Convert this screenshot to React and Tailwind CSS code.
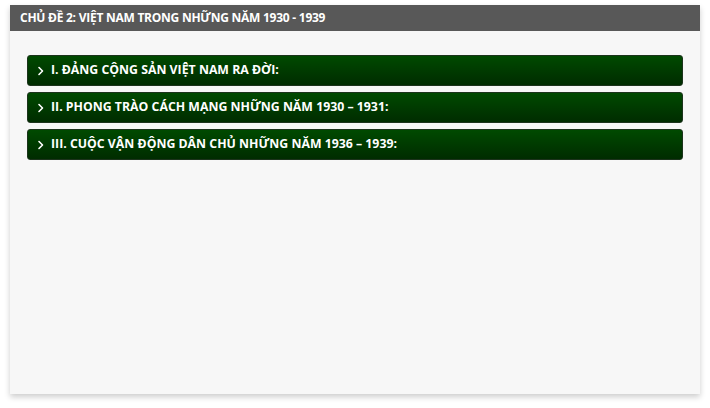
import React from "react";

const items = [
  "I. ĐẢNG CỘNG SẢN VIỆT NAM RA ĐỜI:",
  "II. PHONG TRÀO CÁCH MẠNG NHỮNG NĂM 1930 – 1931:",
  "III. CUỘC VẬN ĐỘNG DÂN CHỦ NHỮNG NĂM 1936 – 1939:",
];

function Chevron() {
  return (
    <svg width="8" height="10" viewBox="0 0 8 10" className="shrink-0">
      <path d="M2 1.5 L5.5 5 L2 8.5" fill="none" stroke="white" strokeWidth="1.6" strokeLinecap="round" strokeLinejoin="round" />
    </svg>
  );
}

export default function App() {
  return (
    <div className="w-[710px] h-[408px] bg-white pt-[5px] pl-[10px]" style={{ fontFamily: '"Open Sans", sans-serif' }}>
      <div className="w-[690px] h-[389px] bg-[#f7f7f7] shadow-[0_3px_6px_rgba(0,0,0,0.2)] flex flex-col">
        <div className="h-[26px] bg-[#585858] flex items-center pl-[10px] text-white font-bold text-[12px] tracking-[-0.25px]">
          CHỦ ĐỀ 2: VIỆT NAM TRONG NHỮNG NĂM 1930 - 1939
        </div>
        <div className="flex flex-col gap-[6px] pt-[24px] px-[17px]">
          {items.map((t) => (
            <div
              key={t}
              className="h-[31px] rounded-[3px] border border-[#1c331c] bg-gradient-to-b from-[#004a00] to-[#002c00] flex items-center gap-[6px] pl-[9px] text-white font-bold text-[12.3px]"
            >
              <Chevron />
              <span>{t}</span>
            </div>
          ))}
        </div>
      </div>
    </div>
  );
}
